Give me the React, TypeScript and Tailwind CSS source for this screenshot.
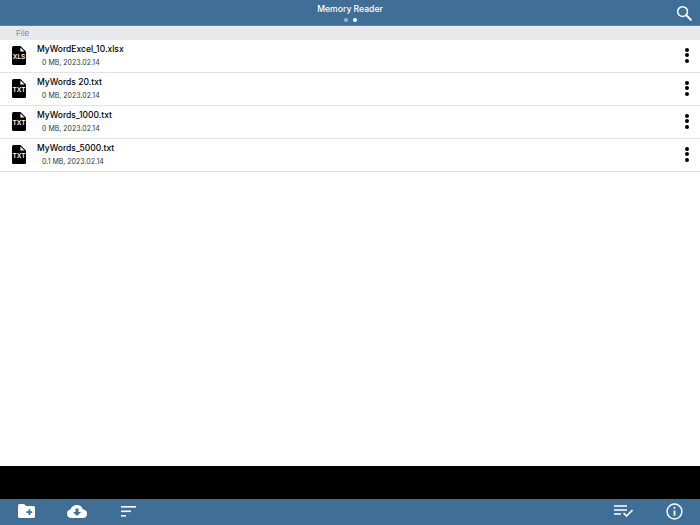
const files = [
  { name: 'MyWordExcel_10.xlsx', meta: '0 MB, 2023.02.14', kind: 'XLS' },
  { name: 'MyWords 20.txt', meta: '0 MB, 2023.02.14', kind: 'TXT' },
  { name: 'MyWords_1000.txt', meta: '0 MB, 2023.02.14', kind: 'TXT' },
  { name: 'MyWords_5000.txt', meta: '0.1 MB, 2023.02.14', kind: 'TXT' },
];

function FileIcon({ kind }: { kind: string }) {
  return (
    <div className="relative h-[19px] w-[14px] shrink-0">
      <svg width="14" height="19" viewBox="0 0 14 19" className="block">
        <path d="M1.5 0H8.5L14 5.5V17.5Q14 19 12.5 19H1.5Q0 19 0 17.5V1.5Q0 0 1.5 0Z" fill="#000" />
        <path d="M8.4 1.4L12.6 5.6H8.4Z" fill="#fff" />
      </svg>
      <span className="absolute left-[-2px] right-[-2px] top-[7.5px] text-center text-[6.5px] leading-[9px] font-semibold text-white">
        {kind}
      </span>
    </div>
  );
}

function MoreDots() {
  return (
    <div className="flex flex-col gap-[1.5px]">
      <span className="h-[4px] w-[4px] rounded-full bg-black" />
      <span className="h-[4px] w-[4px] rounded-full bg-black" />
      <span className="h-[4px] w-[4px] rounded-full bg-black" />
    </div>
  );
}

export default function App() {
  return (
    <div className="flex h-[525px] w-[700px] flex-col overflow-hidden bg-white font-['Inter','Noto_Sans_CJK_KR',sans-serif]">
      <header className="relative flex h-[26px] shrink-0 flex-col items-center border-b border-[#5d84a3] bg-[#3f6f96]">
        <span className="mt-[3px] text-[8.6px] leading-[13px] font-medium text-white">Memory Reader</span>
        <div className="mt-[2px] flex gap-[5px]">
          <span className="h-[4px] w-[4px] rounded-full bg-[#9db6ca]" />
          <span className="h-[4px] w-[4px] rounded-full bg-white" />
        </div>
        <svg width="16" height="16" viewBox="0 0 17 17" className="absolute right-[8px] top-[5px]" fill="none" stroke="#fff">
          <circle cx="7" cy="7" r="5.2" strokeWidth="1.6" />
          <path d="M11 11L15.8 15.8" strokeWidth="2.2" strokeLinecap="round" />
        </svg>
      </header>

      <div className="h-[14px] shrink-0 bg-[#e8e9ed] pl-[16px] text-[8px] leading-[14px] text-[#8a8a8e]">File</div>

      <div className="flex-1">
        {files.map((file) => (
          <div key={file.name} className="flex h-[33px] items-center border-b border-[#e3e3e5] pr-[11px] pb-[2px] pl-[12px]">
            <FileIcon kind={file.kind} />
            <div className="ml-[11px] flex-1">
              <div className="text-[8.5px] leading-[12px] font-medium text-black">{file.name}</div>
              <div className="mt-[3px] pl-[5px] text-[7px] leading-[10px] text-[#333]">{file.meta}</div>
            </div>
            <MoreDots />
          </div>
        ))}
      </div>

      <div className="h-[33px] shrink-0 bg-black" />

      <footer className="flex h-[26px] shrink-0 items-center bg-[#3f6f96] pr-[17px] pb-[2px] pl-[18px]">
        <svg width="17" height="14" viewBox="0 0 17 14">
          <path d="M1.5 0H6L8 2H15.5Q17 2 17 3.5V12.5Q17 14 15.5 14H1.5Q0 14 0 12.5V1.5Q0 0 1.5 0Z" fill="#fff" />
          <path d="M10.5 5.2H12.3V7.2H14.3V9H12.3V11H10.5V9H8.5V7.2H10.5Z" fill="#3f6f96" />
        </svg>
        <svg width="20" height="14" viewBox="0 0 20 14" className="ml-[32px]">
          <path d="M5 14Q0 14 0 9.8Q0 6.2 3.5 5.6Q5 1 10 1Q14.2 1 15.8 5.2Q20 5.8 20 9.8Q20 14 15.5 14Z" fill="#fff" />
          <path d="M8.5 4.5H11.5V8H14L10 12L6 8H8.5Z" fill="#3f6f96" />
        </svg>
        <svg width="15" height="11" viewBox="0 0 15 11" className="ml-[34px]" fill="#fff">
          <rect x="0" y="0" width="15" height="1.6" />
          <rect x="0" y="4.5" width="10" height="1.6" />
          <rect x="0" y="9" width="5" height="1.6" />
        </svg>
        <svg width="19" height="12" viewBox="0 0 19 12" className="ml-auto" fill="none" stroke="#fff">
          <path d="M0 1H13M0 5H13M0 9H7" strokeWidth="1.6" />
          <path d="M9.5 8L12.5 11L18.5 5" strokeWidth="1.6" />
        </svg>
        <svg width="17" height="17" viewBox="0 0 17 17" className="ml-[33px]" fill="none" stroke="#fff">
          <circle cx="8.5" cy="8.5" r="7.4" strokeWidth="1.5" />
          <path d="M8.5 7.5V12.8" strokeWidth="1.8" />
          <circle cx="8.5" cy="4.8" r="1" fill="#fff" stroke="none" />
        </svg>
      </footer>
    </div>
  );
}
